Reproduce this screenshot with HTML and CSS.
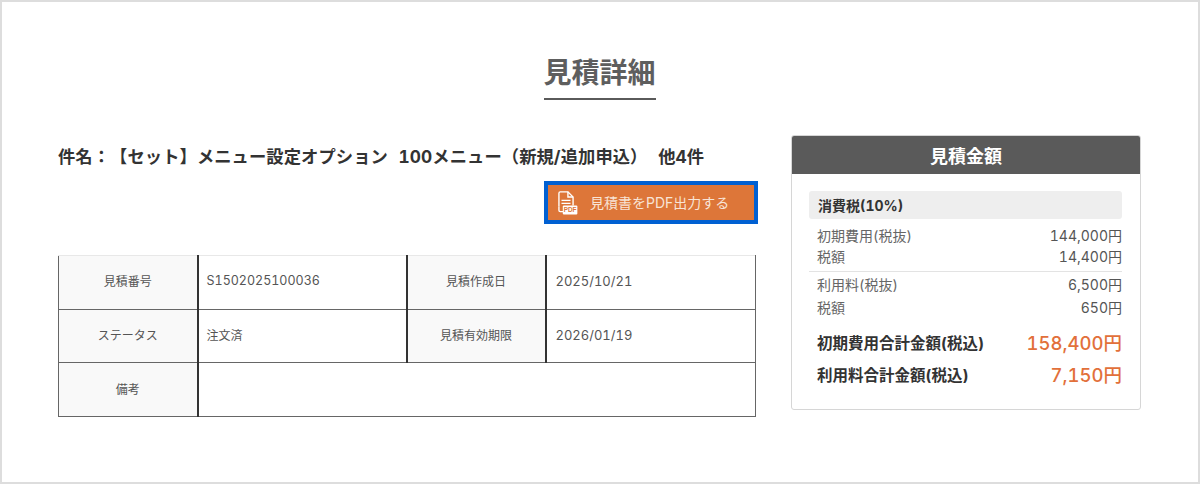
FILE: index.html
```html
<!DOCTYPE html>
<html lang="ja">
<head>
<meta charset="utf-8">
<title>見積詳細</title>
<link rel="stylesheet" href="styles.css">
</head>
<body>
<div class="frame">
  <h1 class="title"><span class="title-text">見積詳細</span></h1>
  <div class="content">
    <div class="left">
      <p class="subject">件名：【セット】メニュー設定オプション 100メニュー（新規/追加申込） 他4件</p>
      <div class="btn-row">
        <a class="pdf-btn">
          <svg class="pdf-icon" width="21" height="24" viewBox="0 0 24 28" fill="none">
            <path d="M2 18V2.5C2 1.7 2.7 1 3.5 1H12.5L18.5 7V17" stroke="#fff" stroke-width="1.6"/>
            <path d="M12.5 1V7H18.5" stroke="#fff" stroke-width="1.6"/>
            <path d="M5 11H15.5M5 14.5H15.5" stroke="#fff" stroke-width="1.5"/>
            <path d="M2 18V22.5C2 23.3 2.7 24 3.5 24H7" stroke="#fff" stroke-width="1.6"/>
            <rect x="6.5" y="17" width="17" height="10.5" rx="1.2" fill="#fff"/>
            <text x="15" y="25" class="pdf-label" text-anchor="middle">PDF</text>
          </svg>
          <span>見積書をPDF出力する</span>
        </a>
      </div>
      <table class="info">
        <colgroup><col class="c1"><col class="c2"><col class="c3"><col class="c4"></colgroup>
        <tr><th>見積番号</th><td class="code">S1502025100036</td><th>見積作成日</th><td class="num">2025/10/21</td></tr>
        <tr><th>ステータス</th><td>注文済</td><th>見積有効期限</th><td class="num">2026/01/19</td></tr>
        <tr><th>備考</th><td colspan="3"></td></tr>
      </table>
    </div>
    <aside class="panel">
      <h2 class="panel-head">見積金額</h2>
      <div class="panel-body">
        <div class="tax-head">消費税(10%)</div>
        <div class="row first"><span>初期費用(税抜)</span><span>144,000円</span></div>
        <div class="row sep"><span>税額</span><span>14,400円</span></div>
        <div class="row third"><span>利用料(税抜)</span><span>6,500円</span></div>
        <div class="row fourth"><span>税額</span><span>650円</span></div>
        <div class="total t1"><span class="total-label">初期費用合計金額(税込)</span><span class="total-num">158,400円</span></div>
        <div class="total t2"><span class="total-label">利用料合計金額(税込)</span><span class="total-num">7,150円</span></div>
      </div>
    </aside>
  </div>
</div>
</body>
</html>
```
FILE: styles.css
```css
* { box-sizing: border-box; }
html, body { margin: 0; padding: 0; background: #fff; }
body {
  font-family: Inter, "Noto Sans CJK JP", "Noto Sans", sans-serif;
  font-variant-numeric: tabular-nums;
  text-spacing-trim: space-all;
  color: #333;
}
.frame {
  width: 1200px;
  height: 484px;
  border: 2px solid #ddd;
  background: #fff;
  padding: 0 57px 0 56px;
  overflow: hidden;
}
.title {
  margin: 0;
  padding-top: 52px;
  height: 133px;
  text-align: center;
  font-size: 28px;
  line-height: 38px;
  font-weight: 700;
  color: #5e5e5e;
}
.title-text {
  display: inline-block;
  width: 112px;
  height: 46px;
  border-bottom: 2px solid #5a5a5a;
  white-space: nowrap;
}
.content {
  display: flex;
  justify-content: space-between;
}
.left { width: 697px; }
.subject {
  margin: 10px 0 0;
  font-size: 17.3px;
  line-height: 24px;
  font-weight: 700;
  letter-spacing: 0.08px;
  word-spacing: 6px;
  color: #333;
  white-space: pre;
}
.btn-row {
  display: flex;
  justify-content: flex-end;
  margin: 12px -3px 31px 0;
}
.pdf-btn {
  display: flex;
  align-items: center;
  width: 214px;
  height: 43px;
  padding-left: 9px;
  background: #dd7639;
  border: 4px solid #0060d2;
  color: #f8e4d6;
  font-size: 14px;
}
.pdf-btn span { margin-left: 12px; padding-bottom: 2px; }
.pdf-icon { flex: none; margin-top: 1px; }
.pdf-label {
  font-family: "Liberation Sans", sans-serif;
  font-size: 7.5px;
  font-weight: 700;
  fill: #dd7639;
}
.info {
  width: 697px;
  table-layout: fixed;
  border-collapse: collapse;
  font-size: 12px;
  color: #555;
}
.c1 { width: 139px; }
.c2 { width: 209px; }
.c3 { width: 139px; }
.c4 { width: 210px; }
.info tr { height: 53.7px; }
.info th, .info td {
  border: 1px solid #666;
  border-left: 2px solid #333;
  padding: 0 0 3px;
  font-weight: 400;
}
.info th:first-child { border-left: 1px solid #666; }
.info td:last-child { border-right: 1px solid #666; }
.info tr:first-child th, .info tr:first-child td { border-top: 1px solid #e8e8e8; }
.info th {
  background: #f9f9f9;
  text-align: center;
}
.info td { padding-left: 8px; background: #fff; }
.info td.num { font-size: 13px; padding-left: 9px; }
.info td.code { font-size: 12.5px; }
.panel {
  width: 350px;
  height: 275px;
  border: 1px solid #d6d6d6;
  border-radius: 3px;
  overflow: hidden;
}
.panel-head {
  margin: 0;
  height: 38px;
  padding-top: 2px;
  background: #5a5a5a;
  color: #fff;
  font-size: 18px;
  font-weight: 700;
  line-height: 38px;
  text-align: center;
}
.panel-body { padding: 17px 18px 0 17px; }
.tax-head {
  height: 28px;
  line-height: 30px;
  padding-left: 9px;
  background: #eee;
  border-radius: 3px;
  font-size: 14px;
  font-weight: 700;
  color: #333;
}
.row {
  display: flex;
  justify-content: space-between;
  height: 21px;
  line-height: 21px;
  padding-left: 8px;
  font-size: 14px;
  color: #555;
}
.row.first { margin-top: 6px; }
.row.sep {
  height: 26px;
  border-bottom: 1px solid #e3e3e3;
  margin-bottom: 2px;
}
.row.fourth { margin-top: 2px; }
.row span:first-child { color: #666; }
.total {
  display: flex;
  justify-content: space-between;
  align-items: center;
  padding-left: 8px;
}
.t1 { margin-top: 8px; height: 32px; }
.t2 { height: 32px; }
.total-label { font-size: 15.5px; font-weight: 700; color: #333; }
.total-num { font-size: 18.5px; font-weight: 500; color: #e2703a; }
```
